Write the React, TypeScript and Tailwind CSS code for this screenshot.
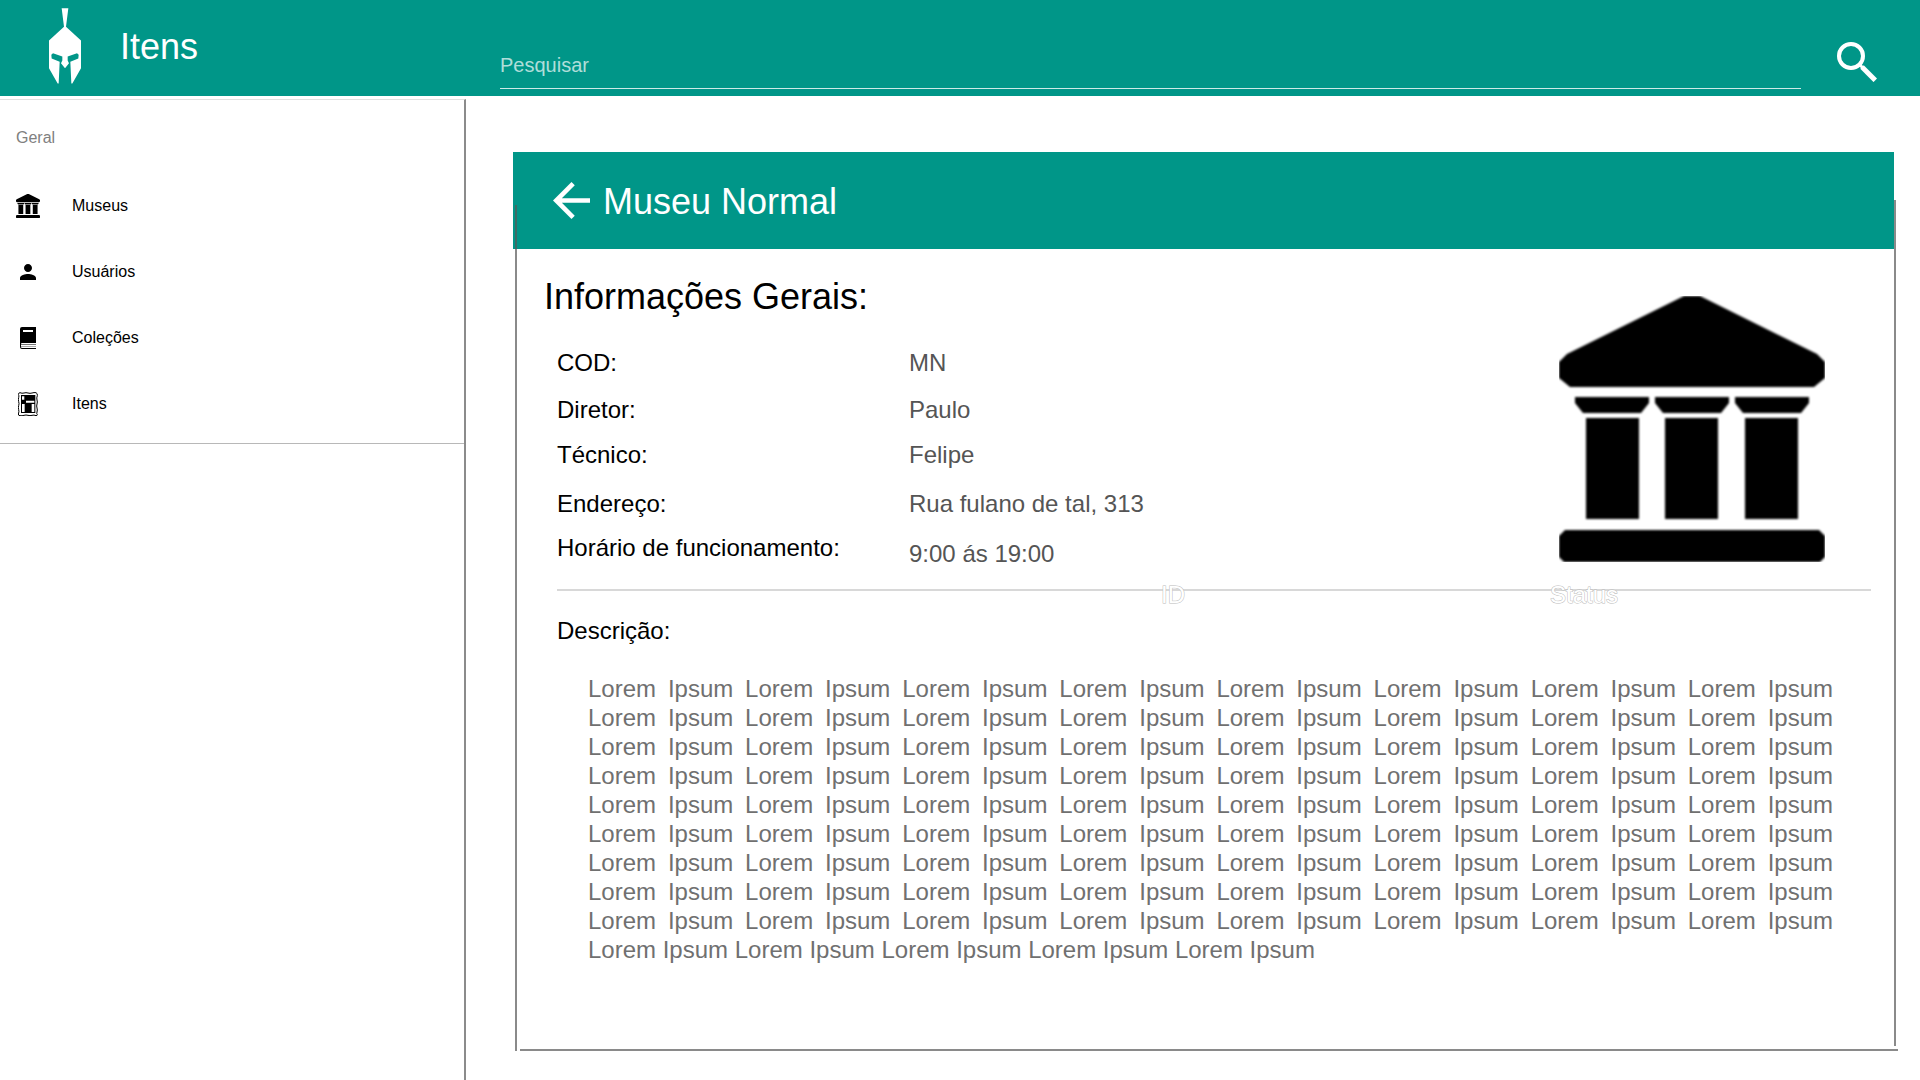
import React from "react";

function MuseumIcon({ className }: { className: string }) {
  return (
    <svg viewBox="0 0 266 266" className={className} fill="currentColor" aria-hidden="true">
      <path d="M125 0h16l117 58 8 8v16l-11 9H11L0 82V66l8-8z" />
      <path d="M16 101h74v6l-8 10H24l-8-10zM96 101h74v6l-8 10h-58l-8-10zM176 101h74v6l-8 10h-58l-8-10z" />
      <path d="M27 122h53v101H27zM106 122h53v101h-53zM186 122h53v101h-53z" />
      <path d="M6 234h254l6 6v21l-5 5H5l-5-5v-21z" />
    </svg>
  );
}

function PersonIcon() {
  return (
    <svg viewBox="0 0 24 24" className="size-6" fill="currentColor" aria-hidden="true">
      <path d="M12 12c2.21 0 4-1.79 4-4s-1.79-4-4-4-4 1.79-4 4 1.79 4 4 4zm0 2c-2.67 0-8 1.34-8 4v2h16v-2c0-2.66-5.33-4-8-4z" />
    </svg>
  );
}

function BookIcon() {
  return (
    <svg viewBox="0 0 16 22" className="h-[22px] w-4" aria-hidden="true">
      <path
        d="M2 0h14v16H2q-1 0-1 1v3q0 1 1 1h14v1H2q-2 0-2-2V2q0-2 2-2zM3 3v2h10V3z"
        fill="currentColor"
        fillRule="evenodd"
      />
      <path d="M1 17.500h15" stroke="#777" strokeWidth="1" />
      <path d="M1 19.500h15" stroke="#aaa" strokeWidth="1" />
    </svg>
  );
}

function FrameIcon() {
  return (
    <svg viewBox="0 0 60 72" className="h-6 w-5" aria-hidden="true">
      <path
        d="M6 2q6 3 12 1t12 0 12 0 12-1q5 2 4 9-3 7-1 13t0 12 0 12 0 12 1 8q0 3-4 3-6-3-12-1t-12 0-12 0-12 1q-5 0-5-5 3-7 1-13t0-12 0-12 0-12-1-10q0-4 5-5z"
        fill="none"
        stroke="currentColor"
        strokeWidth="3"
      />
      <path
        d="M9 9h43v54H9zM12 13v10h7V13zM24 26v6h25v-6zM12 36v24h8V36zM41 36v24h8V36z"
        fill="currentColor"
        fillRule="evenodd"
      />
    </svg>
  );
}

const NAV = [
  { label: "Museus", icon: <MuseumIcon className="size-6" /> },
  { label: "Usuários", icon: <PersonIcon /> },
  { label: "Coleções", icon: <BookIcon /> },
  { label: "Itens", icon: <FrameIcon /> },
];

// Each pair is kept on one line by its no-break space.
const DESCRIPTION = Array(77).fill("Lorem\u00a0Ipsum").join(" ");

function Header() {
  return (
    <header className="flex h-24 items-end bg-[#009688] text-white">
      <a href="#" className="flex w-[500px] shrink-0 self-start pt-2 pl-[49px]">
        <svg viewBox="147 23 96 227" className="h-[76px] w-8" fill="currentColor" aria-hidden="true">
          <path d="M185 23h20l-7 56 45 41v83l-26 46h-3l-3-65 24-10 1-11-5-5-28 10v12l4 8-12 15-12-15 4-8v-12l-28-10-5 5 1 11 24 10-3 65h-3l-26-46v-83l45-41z" />
        </svg>
        <span className="ml-[39px] text-4xl leading-[78px]">Itens</span>
      </a>
      <input
        type="search"
        aria-label="Pesquisar"
        placeholder="Pesquisar"
        className="mb-[7px] h-12 min-w-0 flex-1 border-b border-white/80 bg-transparent pt-0.5 text-xl outline-none placeholder:text-white/70"
      />
      <button type="button" aria-label="Buscar" className="mr-[43px] mb-[14px] ml-9">
        <svg viewBox="0 0 40 40" className="size-10" fill="none" stroke="currentColor" aria-hidden="true">
          <circle cx="14" cy="14" r="12" strokeWidth="4" />
          <path d="M22.500 22.500l3 3" strokeWidth="3" />
          <path d="M25 25l13.300 13.300" strokeWidth="5" />
        </svg>
      </button>
    </header>
  );
}

function Sidebar() {
  return (
    <aside className="mt-[3px] w-[466px] shrink-0 border-t border-r-2 border-t-[#e0e0e0] border-r-[#8b8b8b]">
      <nav aria-label="Geral" className="border-b border-[#b8b8b8] pb-1.5">
        <h2 className="mt-[26px] mb-[23px] pl-4 text-base text-[#808080]">Geral</h2>
        <ul>
          {NAV.map((item) => (
            <li key={item.label}>
              <a href="#" className="flex h-[66px] items-center pl-4">
                <span className="flex w-6 justify-center">{item.icon}</span>
                <span className="ml-8 text-base">{item.label}</span>
              </a>
            </li>
          ))}
        </ul>
      </nav>
    </aside>
  );
}

function Row({ label, value, className }: { label: string; value: string; className: string }) {
  return (
    <div className={`flex ${className}`}>
      <dt className="w-[352px] self-start">{label}</dt>
      <dd className="self-end text-[#555]">{value}</dd>
    </div>
  );
}

function MuseumCard() {
  return (
    <section className="relative flex-1">
      <div className="flex h-[97px] items-center bg-[#009688] pl-10 text-white">
        <button type="button" aria-label="Voltar">
          <svg viewBox="4 4 16 16" className="size-[37px]" fill="currentColor" aria-hidden="true">
            <path d="M20 11H7.830l5.590-5.590L12 4l-8 8 8 8 1.410-1.410L7.830 13H20v-2z" />
          </svg>
        </button>
        <h1 className="ml-[13px] pt-0.5 text-4xl">Museu Normal</h1>
      </div>

      <div className="flex items-start justify-between pt-7 pr-[69px] pl-[31px]">
        <div>
          <h2 className="text-4xl">Informações Gerais:</h2>
          <dl className="mt-8 ml-[13px] text-2xl leading-7">
            <Row label="COD:" value="MN" className="mb-[19px]" />
            <Row label="Diretor:" value="Paulo" className="mb-[17px]" />
            <Row label="Técnico:" value="Felipe" className="mb-[21px]" />
            <Row label="Endereço:" value="Rua fulano de tal, 313" className="mb-4" />
            <Row label="Horário de funcionamento:" value="9:00 ás 19:00" className="h-[34px]" />
          </dl>
        </div>
        <div className="mt-[19px] overflow-hidden">
          <MuseumIcon className="size-[266px] blur-[1px]" />
        </div>
      </div>

      <div className="relative mt-[21px] mr-[23px] ml-11 text-2xl leading-7 text-white">
        <hr className="border-t-2 border-[#d8d8d8]" />
        <span className="absolute -top-2 left-[604px] [paint-order:stroke_fill] [-webkit-text-stroke:1px_#bbb]">
          ID
        </span>
        <span className="absolute -top-2 left-[993px] [paint-order:stroke_fill] [-webkit-text-stroke:1px_#bbb]">
          Status
        </span>
      </div>

      <h3 className="mt-[26px] ml-11 text-2xl leading-7">Descrição:</h3>
      <p className="mt-[29px] mr-[61px] ml-[75px] pb-[87px] text-justify text-2xl leading-[29px] text-[#707070]">
        {DESCRIPTION}
      </p>

      <div className="absolute top-[53px] bottom-0 left-0.5 w-0.5 bg-[#595959]/70" />
      <div className="absolute top-12 -right-0.5 bottom-[5px] w-0.5 bg-[#595959]/70" />
      <div className="absolute -right-1 bottom-0 left-[7px] h-0.5 bg-[#595959]/70" />
    </section>
  );
}

export default function App() {
  return (
    <div className="flex min-h-screen flex-col bg-white font-['Liberation_Sans',Arial,sans-serif] text-black">
      <Header />
      <div className="flex flex-1">
        <Sidebar />
        <main className="flex min-w-0 flex-1 flex-col pt-14 pr-[26px] pb-[29px] pl-[47px]">
          <MuseumCard />
        </main>
      </div>
    </div>
  );
}
